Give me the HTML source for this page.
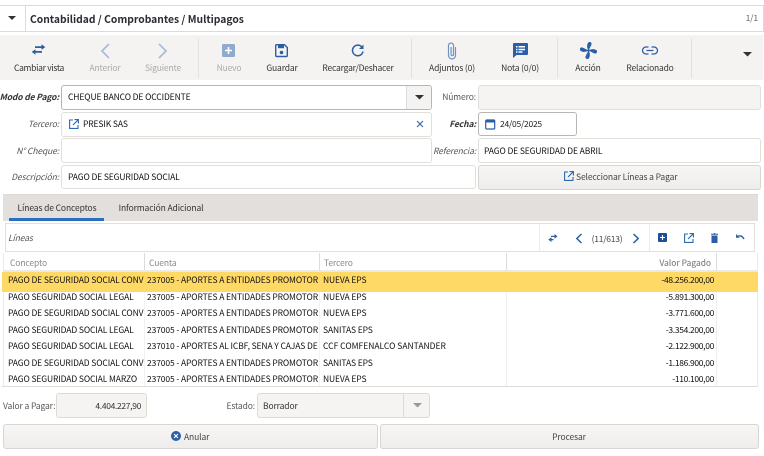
<!DOCTYPE html>
<html><head><meta charset="utf-8">
<style>
html,body{margin:0;padding:0;background:#fff;}
body{width:764px;height:456px;position:relative;overflow:hidden;font-family:"Noto Sans CJK SC","Liberation Sans",sans-serif;font-size:8.5px;letter-spacing:-.12px;color:#333;}
.a{position:absolute;}
.t{position:absolute;white-space:nowrap;line-height:12px;height:12px;}
.c{transform:translateX(-50%);}
.r{transform:translateX(-100%);}
.n{letter-spacing:-.33px;}
.f{position:absolute;box-sizing:border-box;background:#fff;border:1px solid #e2dfdb;border-radius:3px;}
.ro{background:#f6f4f3;}
.lb{position:absolute;white-space:nowrap;line-height:12px;font-style:italic;color:#555;transform:translateX(-100%);}
.btn{position:absolute;box-sizing:border-box;border:1px solid #d9d5d0;border-radius:3px;background:linear-gradient(#f7f6f5,#efedeb);}
.dis{color:#a9a9a9;}
.sep{position:absolute;width:1px;background:#e3e0dd;}
svg{position:absolute;overflow:visible;}
.row{color:#111;}
.tl{letter-spacing:-.15px;}
</style></head><body>

<!-- header -->
<div class="a" style="left:-2px;top:5px;width:764px;height:25px;border:1px solid #dedad5;background:#fff"></div>
<div class="a" style="left:25px;top:6px;width:1px;height:25px;background:#dedad5"></div>
<svg style="left:0;top:0" width="30" height="30"><path d="M8 16h8l-4 4z" fill="#333"/></svg>
<div class="t" style="left:30px;top:13px;font-size:10.3px;letter-spacing:0;font-weight:700;color:#2b2b33">Contabilidad / Comprobantes / Multipagos</div>
<div class="t r" style="left:758px;top:12px;color:#666">1/1</div>

<!-- toolbar -->
<div class="a" style="left:0;top:35px;width:763px;height:45px;background:#f5f3f2"></div>
<div class="sep" style="left:198px;top:38px;height:40px"></div>
<div class="sep" style="left:411px;top:38px;height:40px"></div>
<div class="sep" style="left:557px;top:38px;height:40px"></div>
<div class="sep" style="left:691px;top:38px;height:40px"></div>

<svg style="left:31px;top:44px" width="15" height="11"><path d="M4 2.300h7.500V4H4zM3.500 7h7.500v1.700H3.500z" fill="#2a5ea5"/><path d="M10.500 0.300l3.800 2.800-3.800 2.800zM4.500 5.200L.7 7.900l3.800 2.800z" fill="#2a5ea5"/></svg>
<svg style="left:99px;top:42px" width="12" height="18" fill="none" stroke="#a9bdd8" stroke-width="1.800"><path d="M10 2L3 9l7 7"/></svg>
<svg style="left:157px;top:42px" width="12" height="18" fill="none" stroke="#a9bdd8" stroke-width="1.800"><path d="M2 2l7 7-7 7"/></svg>
<svg style="left:222px;top:44px" width="13" height="13"><rect width="13" height="13" rx="1.500" fill="#8faacd"/><path d="M6.500 3v7M3 6.500h7" stroke="#fff" stroke-width="1.600"/></svg>
<svg style="left:275px;top:44px" width="13" height="13" fill="none"><path d="M1.500.7h8l2.800 2.800v8a1 1 0 0 1-1 1H1.700a1 1 0 0 1-1-1v-9.800a1 1 0 0 1 .8-1z" stroke="#2a5ea5" stroke-width="1.400"/><rect x="3" y="1" width="6" height="3.200" fill="#2a5ea5"/><circle cx="6.500" cy="8.500" r="1.800" fill="#2a5ea5"/></svg>
<svg style="left:351px;top:44px" width="13" height="13" fill="none"><path d="M11 3.200A5.300 5.300 0 1 0 12 7.500" stroke="#2a5ea5" stroke-width="1.500"/><path d="M12.500.5v4.500H8z" fill="#2a5ea5"/></svg>
<svg style="left:447px;top:42px" width="10" height="18" fill="none" stroke="#6f94c4" stroke-width="1.200"><path d="M8.500 5v8.500a3.500 3.500 0 0 1-7 0V3.500a2.500 2.500 0 0 1 5 0v9a1.200 1.200 0 0 1-2.400 0V5"/></svg>
<svg style="left:513px;top:43px" width="15" height="15"><path d="M1 0h13a1 1 0 0 1 1 1v10a1 1 0 0 1-1 1H3.500L0 15V1a1 1 0 0 1 1-1z" fill="#2a5ea5"/><path d="M3 3h1.500v1.500H3zM3 5.700h1.500v1.500H3zM3 8.300h1.500v1.500H3zM5.500 3H12v1.500H5.500zM5.500 5.700H12v1.500H5.500zM5.500 8.300H9.500v1.500H5.500z" fill="#fff"/></svg>
<svg style="left:580px;top:42px" width="17" height="17"><g transform="translate(8.500 8.500)" fill="#2a5ea5"><path d="M0 0C-1.800 -2.800 -2 -6.300 .3 -8.500C2.300 -8.700 3.400 -7.800 3 -6.300C2.500 -4.500 1.200 -2.500 0 0z"/><path transform="rotate(90)" d="M0 0C-1.800 -2.800 -2 -6.300 .3 -8.500C2.300 -8.700 3.400 -7.800 3 -6.300C2.500 -4.500 1.200 -2.500 0 0z"/><path transform="rotate(180)" d="M0 0C-1.800 -2.800 -2 -6.300 .3 -8.500C2.300 -8.700 3.400 -7.800 3 -6.300C2.500 -4.500 1.200 -2.500 0 0z"/><path transform="rotate(270)" d="M0 0C-1.800 -2.800 -2 -6.300 .3 -8.500C2.300 -8.700 3.400 -7.800 3 -6.300C2.500 -4.500 1.200 -2.500 0 0z"/><circle r="1.200"/></g></svg>
<svg style="left:642px;top:46px" width="16" height="9" fill="none" stroke="#2a5ea5" stroke-width="1.300"><path d="M6.500 1H4a3.300 3.300 0 0 0 0 7h2.500M9.500 1H12a3.300 3.300 0 0 1 0 7H9.500M4.500 4.500h7"/></svg>
<svg style="left:742px;top:50px" width="12" height="8"><path d="M1 2h9l-4.500 4.500z" fill="#333"/></svg>

<div class="t c" style="left:39px;top:62px;letter-spacing:-.3px">Cambiar vista</div>
<div class="t c dis tl" style="left:105px;top:62px">Anterior</div>
<div class="t c dis tl" style="left:163px;top:62px">Siguiente</div>
<div class="t c dis tl" style="left:229px;top:62px">Nuevo</div>
<div class="t c tl" style="left:282px;top:62px">Guardar</div>
<div class="t c" style="left:358px;top:62px;letter-spacing:-.2px">Recargar/Deshacer</div>
<div class="t c tl" style="left:452px;top:62px">Adjuntos (0)</div>
<div class="t c tl" style="left:520px;top:62px">Nota (0/0)</div>
<div class="t c tl" style="left:588px;top:62px">Acción</div>
<div class="t c" style="left:650px;top:62px;letter-spacing:-.2px">Relacionado</div>

<!-- form -->
<div class="lb" style="left:59px;top:91px;font-weight:700;color:#333">Modo de Pago:</div>
<div class="f" style="left:61px;top:85px;width:371px;height:25px;border-color:#b9b5b0"></div>
<div class="a" style="left:406px;top:86px;width:25px;height:23px;background:#f5f3f2;border-left:1px solid #ddd;box-sizing:border-box;border-radius:0 3px 3px 0"></div>
<svg style="left:414px;top:94px" width="12" height="7"><path d="M1 1h9l-4.500 4.500z" fill="#333"/></svg>
<div class="t" style="left:68px;top:91px;color:#111">CHEQUE BANCO DE OCCIDENTE</div>

<div class="lb" style="left:59px;top:118px">Tercero:</div>
<div class="f" style="left:61px;top:112px;width:371px;height:25px"></div>
<svg style="left:69px;top:119px" width="10" height="10" fill="none" stroke="#2a6ab0" stroke-width="1.100"><path d="M4 1H.6v8.400H9V6M5.500.6H9.400V4.500M9.200.8L4 6"/></svg>
<div class="t" style="left:83px;top:118px;color:#111">PRESIK SAS</div>
<svg style="left:416px;top:120px" width="8" height="8" stroke="#3a6ca8" stroke-width="1.200"><path d="M1 1l6 6M7 1L1 7"/></svg>

<div class="lb" style="left:59px;top:145px">N° Cheque:</div>
<div class="f" style="left:61px;top:138px;width:371px;height:25px"></div>

<div class="lb" style="left:59px;top:171px">Descripción:</div>
<div class="f" style="left:61px;top:165px;width:415px;height:24px"></div>
<div class="t" style="left:68px;top:171px;color:#111">PAGO DE SEGURIDAD SOCIAL</div>

<div class="lb" style="left:476px;top:91px;font-style:normal">Número:</div>
<div class="f ro" style="left:478px;top:85px;width:283px;height:25px"></div>

<div class="lb" style="left:476px;top:118px;font-weight:700;color:#333">Fecha:</div>
<div class="f" style="left:478px;top:112px;width:99px;height:24px;border-color:#b9b5b0"></div>
<svg style="left:485px;top:118px" width="11" height="12" fill="none"><rect x=".7" y="2" width="9" height="9" rx="1" stroke="#2a5ea5" stroke-width="1.200"/><path d="M.7 2h9v2.500h-9z" fill="#2a5ea5"/></svg>
<div class="t" style="left:500px;top:118px;color:#222;letter-spacing:-.25px">24/05/2025</div>

<div class="lb" style="left:476px;top:145px">Referencia:</div>
<div class="f" style="left:478px;top:138px;width:283px;height:25px"></div>
<div class="t" style="left:484px;top:145px;color:#111">PAGO DE SEGURIDAD DE ABRIL</div>

<div class="btn" style="left:478px;top:165px;width:283px;height:25px"></div>
<svg style="left:564px;top:171px" width="10" height="10" fill="none" stroke="#2a6ab0" stroke-width="1.100"><path d="M4 1H.6v8.400H9V6M5.500.6H9.400V4.500M9.200.8L4 6"/></svg>
<div class="t" style="left:576px;top:171px;color:#444">Seleccionar Líneas a Pagar</div>

<!-- tabs -->
<div class="a" style="left:3px;top:194px;width:755px;height:27px;background:#e2dfdc;border-top:1px solid #dcd9d5;box-sizing:border-box"></div>
<div class="a" style="left:9px;top:218px;width:95px;height:3px;background:#2a6fc0"></div>
<div class="t c" style="left:57px;top:202px">Líneas de Conceptos</div>
<div class="t c" style="left:161px;top:202px">Información Adicional</div>

<!-- inner -->
<div class="a" style="left:5px;top:223px;width:750px;height:29px;box-sizing:border-box;border:1px solid #e2dfdc;background:#fff"></div>
<div class="t" style="left:8px;top:232px;font-style:italic;color:#555">Líneas</div>
<div class="sep" style="left:539px;top:224px;height:27px;background:#eeecea"></div>
<div class="sep" style="left:649px;top:224px;height:27px;background:#eeecea"></div>
<svg style="left:548px;top:234px" width="10" height="8"><path d="M3 1.800h4V3H3zM1.500 5h4v1.200h-4z" fill="#2a5ea5"/><path d="M6.500 0l3 2.400-3 2.400zM3.500 3.200L.3 5.600l3.200 2.400z" fill="#2a5ea5"/></svg>
<svg style="left:575px;top:233px" width="8" height="11" fill="none" stroke="#2a5ea5" stroke-width="1.500"><path d="M6.500 1L1.800 5.500l4.700 4.500"/></svg>
<div class="t c" style="left:607px;top:233px;color:#444;letter-spacing:-.25px">(11/613)</div>
<svg style="left:632px;top:233px" width="8" height="11" fill="none" stroke="#2a5ea5" stroke-width="1.500"><path d="M1.500 1l4.700 4.500-4.700 4.500"/></svg>
<svg style="left:658px;top:233px" width="9" height="9"><rect width="9" height="9" rx="1" fill="#1f4f94"/><path d="M4.500 2v5M2 4.500h5" stroke="#fff" stroke-width="1.100"/></svg>
<svg style="left:684px;top:233px" width="10" height="10" fill="none" stroke="#2a6ab0" stroke-width="1.100"><path d="M4 1H.6v8.400H9V6M5.500.6H9.400V4.500M9.200.8L4 6"/></svg>
<svg style="left:710px;top:233px" width="9" height="10"><path d="M1 0.800h2.500l.5-.8h1l.5.800H8v1H1zM1.500 2.500h6V10h-6z" fill="#2a5ea5"/></svg>
<svg style="left:735px;top:234px" width="10" height="7" fill="none"><path d="M1 0v3.700h3.700z" fill="#2a5ea5"/><path d="M2 3c2.500-2 5-1.500 7 2" stroke="#2a5ea5" stroke-width="1.400"/></svg>

<!-- table -->
<div class="a" style="left:3px;top:253px;width:1px;height:134px;background:#eceae8"></div>
<div class="a" style="left:757px;top:253px;width:1px;height:134px;background:#eceae8"></div>
<div class="a" style="left:144px;top:253px;width:1px;height:19px;background:#dedbd8"></div>
<div class="a" style="left:319px;top:253px;width:1px;height:19px;background:#dedbd8"></div>
<div class="a" style="left:506px;top:253px;width:1px;height:19px;background:#dedbd8"></div>
<div class="a" style="left:716px;top:253px;width:1px;height:19px;background:#dedbd8"></div>
<div class="a" style="left:506px;top:292px;width:1px;height:94px;background:#f0eeec"></div>
<div class="a" style="left:716px;top:292px;width:1px;height:94px;background:#f0eeec"></div>
<div class="a" style="left:144px;top:292px;width:1px;height:94px;background:#f4f2f0"></div>
<div class="a" style="left:319px;top:292px;width:1px;height:94px;background:#f4f2f0"></div>
<div class="a" style="left:4px;top:270px;width:753px;height:2px;background:#ebe9e7"></div>
<div class="t" style="left:10px;top:257px;color:#888">Concepto</div>
<div class="t" style="left:149px;top:257px;color:#888">Cuenta</div>
<div class="t" style="left:324px;top:257px;color:#888">Tercero</div>
<div class="t r" style="left:711px;top:257px;color:#888;font-weight:500">Valor Pagado</div>

<div class="a" style="left:2px;top:272px;width:756px;height:20px;background:#ffd966"></div>

<div class="a" style="left:8px;top:272px;width:136px;height:114px;overflow:hidden">
<div class="t row" style="left:0;top:2px">PAGO DE SEGURIDAD SOCIAL CONVENIO</div>
<div class="t row" style="left:0;top:19px">PAGO SEGURIDAD SOCIAL LEGAL</div>
<div class="t row" style="left:0;top:35px">PAGO DE SEGURIDAD SOCIAL CONVENIO</div>
<div class="t row" style="left:0;top:52px">PAGO SEGURIDAD SOCIAL LEGAL</div>
<div class="t row" style="left:0;top:68px">PAGO SEGURIDAD SOCIAL LEGAL</div>
<div class="t row" style="left:0;top:85px">PAGO DE SEGURIDAD SOCIAL CONVENIO</div>
<div class="t row" style="left:0;top:101px">PAGO SEGURIDAD SOCIAL MARZO</div>
</div>
<div class="a" style="left:147px;top:272px;width:171px;height:114px;overflow:hidden">
<div class="t row" style="left:0;top:2px">237005 - APORTES A ENTIDADES PROMOTORAS</div>
<div class="t row" style="left:0;top:19px">237005 - APORTES A ENTIDADES PROMOTORAS</div>
<div class="t row" style="left:0;top:35px">237005 - APORTES A ENTIDADES PROMOTORAS</div>
<div class="t row" style="left:0;top:52px">237005 - APORTES A ENTIDADES PROMOTORAS</div>
<div class="t row" style="left:0;top:68px">237010 - APORTES AL ICBF, SENA Y CAJAS DE</div>
<div class="t row" style="left:0;top:85px">237005 - APORTES A ENTIDADES PROMOTORAS</div>
<div class="t row" style="left:0;top:101px">237005 - APORTES A ENTIDADES PROMOTORAS</div>
</div>
<div class="t row" style="left:323px;top:274px">NUEVA EPS</div>
<div class="t row" style="left:323px;top:291px">NUEVA EPS</div>
<div class="t row" style="left:323px;top:307px">NUEVA EPS</div>
<div class="t row" style="left:323px;top:324px">SANITAS EPS</div>
<div class="t row" style="left:323px;top:340px;letter-spacing:0">CCF COMFENALCO SANTANDER</div>
<div class="t row" style="left:323px;top:357px">SANITAS EPS</div>
<div class="t row" style="left:323px;top:373px">NUEVA EPS</div>
<div class="t r row n" style="left:714px;top:274px">-48.256.200,00</div>
<div class="t r row n" style="left:714px;top:291px">-5.891.300,00</div>
<div class="t r row n" style="left:714px;top:307px">-3.771.600,00</div>
<div class="t r row n" style="left:714px;top:324px">-3.354.200,00</div>
<div class="t r row n" style="left:714px;top:340px">-2.122.900,00</div>
<div class="t r row n" style="left:714px;top:357px">-1.186.900,00</div>
<div class="t r row n" style="left:714px;top:373px">-110.100,00</div>
<div class="a" style="left:2px;top:386px;width:756px;height:1px;background:#dedbd8"></div>

<!-- bottom -->
<div class="t" style="left:3px;top:400px;color:#555">Valor a Pagar:</div>
<div class="f ro" style="left:56px;top:393px;width:91px;height:25px;border-color:#dedbd7"></div>
<div class="t r n" style="left:141px;top:400px;color:#333">4.404.227,90</div>
<div class="t r" style="left:255px;top:400px;color:#555">Estado:</div>
<div class="f ro" style="left:257px;top:393px;width:173px;height:25px;border-color:#dedbd7"></div>
<div class="a" style="left:403px;top:394px;width:1px;height:23px;background:#dedbd7"></div>
<div class="t" style="left:263px;top:400px;color:#333">Borrador</div>
<svg style="left:412px;top:402px" width="12" height="7"><path d="M1 1h9l-4.500 4.500z" fill="#999"/></svg>

<div class="btn" style="left:3px;top:424px;width:375px;height:25px"></div>
<svg style="left:171px;top:431px" width="10" height="10"><circle cx="5" cy="5" r="5" fill="#2a5ea5"/><path d="M3 3l4 4M7 3L3 7" stroke="#fff" stroke-width="1.200"/></svg>
<div class="t" style="left:184px;top:431px;color:#444">Anular</div>
<div class="btn" style="left:380px;top:424px;width:379px;height:25px"></div>
<div class="t c" style="left:569px;top:431px;color:#444">Procesar</div>

</body></html>
